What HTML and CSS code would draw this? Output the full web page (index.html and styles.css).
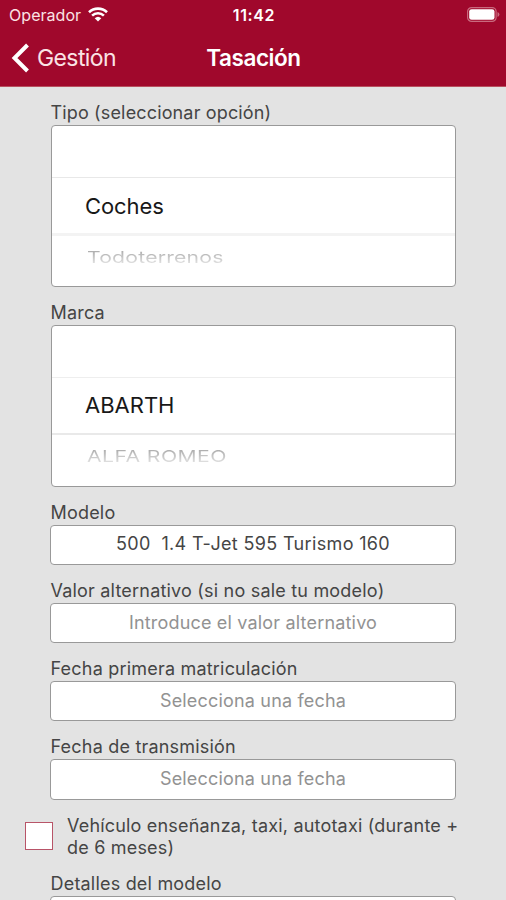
FILE: index.html
```html
<!DOCTYPE html>
<html lang="es">
<head>
<meta charset="utf-8">
<title>Tasación</title>
<link rel="stylesheet" href="styles.css">
</head>
<body>
<header class="header">
  <div class="status">
    <div class="carrier"><span class="t-carrier">Operador</span>
      <svg class="wifi" viewBox="0 0 20 15"><path d="M1 5.2a13 13 0 0 1 18 0M4.1 8.6a8.6 8.6 0 0 1 11.8 0" fill="none" stroke="#fff" stroke-width="2.6"/><path d="M10 14.600l-3.300-3.400a4.800 4.800 0 0 1 6.600 0z" fill="#fff"/></svg>
    </div>
    <span class="t-clock">11:42</span>
    <svg class="battery" viewBox="0 0 33 15"><rect x=".6" y=".6" width="28.500" height="13.800" rx="4" fill="none" stroke="#c96a7e" stroke-width="1.2"/><rect x="2.200" y="2.200" width="25.300" height="10.600" rx="2.400" fill="#fff"/><path d="M30.500 5v5q1.900-.8 1.900-2.500T30.500 5z" fill="#c96a7e"/></svg>
  </div>
  <nav class="nav">
    <a class="back"><svg class="chevron" viewBox="0 0 18 30"><path d="M16.500 2L3.500 15l13 13" fill="none" stroke="#fff" stroke-width="4"/></svg><span class="t-back">Gestión</span></a>
    <h1><span class="t-title">Tasación</span></h1>
  </nav>
</header>
<main class="form">
  <label><span class="t-tipo">Tipo (seleccionar opción)</span></label>
  <div class="picker"><div class="row"></div><div class="row sel"><span class="t-coches">Coches</span></div><div class="row next"><span class="t-todo">Todoterrenos</span></div></div>
  <label><span class="t-marca">Marca</span></label>
  <div class="picker last"><div class="row"></div><div class="row sel thin"><span class="t-abarth">ABARTH</span></div><div class="row next"><span class="t-alfa">ALFA ROMEO</span></div></div>
  <label><span class="t-modelo">Modelo</span></label>
  <div class="field filled"><span class="t-500">500&nbsp; 1.4 T-Jet 595 Turismo 160</span></div>
  <label><span class="t-valor">Valor alternativo (si no sale tu modelo)</span></label>
  <div class="field"><span class="t-intro">Introduce el valor alternativo</span></div>
  <label><span class="t-fecha1">Fecha primera matriculación</span></label>
  <div class="field"><span class="t-sel">Selecciona una fecha</span></div>
  <label><span class="t-fecha2">Fecha de transmisión</span></label>
  <div class="field"><span class="t-sel">Selecciona una fecha</span></div>
  <div class="check"><span class="box"></span><p><span class="t-veh">Vehículo enseñanza, taxi, autotaxi (durante +</span><br><span class="t-meses">de 6 meses)</span></p></div>
  <label><span class="t-det">Detalles del modelo</span></label>
  <div class="field cut"></div>
</main>
</body>
</html>
```
FILE: styles.css
```css
* { box-sizing: border-box; }
html { overflow: hidden; }
body { margin: 0; height: 900px; overflow: hidden; display: flex; flex-direction: column; background: #e3e3e3; color: #454545; font-family: Inter, "Liberation Sans", sans-serif; }
span { white-space: pre; }
.header { flex: none; height: 87px; background: #a0082c; color: #fff; border-bottom: 1px solid #b8505f; }
.status { height: 29px; display: grid; grid-template-columns: 1fr auto 1fr; align-items: center; padding: 0 6px 0 9px; font-size: 16px; }
.carrier { display: flex; align-items: center; gap: 7px; color: #fbe3e5; }
.t-carrier { letter-spacing: .05px; }
.wifi { width: 20px; height: 15px; }
.t-clock { font-weight: 600; letter-spacing: .6px; margin-left: -1px; }
.battery { width: 33px; height: 15px; justify-self: end; margin-top: -1px; }
.nav { height: 57px; display: grid; grid-template-columns: 1fr auto 1fr; align-items: center; padding: 0 11px; }
.back { display: flex; align-items: center; gap: 8px; font-size: 23px; color: #fbe3e5; }
.t-back { letter-spacing: -.6px; }
.chevron { width: 18px; height: 30px; }
h1 { margin: 0; font-size: 22.500px; font-weight: 600; letter-spacing: -.45px; padding-left: 1px; }
.form { flex: 1; min-height: 0; overflow: hidden; padding: 14px 50px 0; }
label { display: block; height: 24px; line-height: 24px; font-size: 18px; letter-spacing: .2px; padding-left: .5px; }
.picker { height: 162px; margin-bottom: 13.500px; margin-left: 1px; border: 1px solid #999; border-radius: 4px; background: #fff; overflow: hidden; }
.last { margin-bottom: 14.100px; }
.row { height: 51px; display: flex; align-items: center; padding-left: 33px; }
.sel { height: 59px; border: solid #e8e8e8; border-width: 1px 0 3px; border-bottom-color: #f3f3f3; color: #181818; font-size: 22px; letter-spacing: -.1px; }
.thin { border-width: 1px 0 2px; border-top-color: #eee; border-bottom-color: #e9e9e9; height: 58px; }
.t-abarth { letter-spacing: 0; }
.next { height: 42px; padding-left: 35px; font-size: 21.200px; }
.next span { transform: scaleY(.78); background: linear-gradient(#aaa 15%, #e2e2e2 85%); background-clip: text; color: transparent; }
.t-todo { letter-spacing: .2px; }
.t-alfa { letter-spacing: .42px; }
.field { height: 40px; margin-bottom: 14px; border: 1px solid #999; border-radius: 4px; background: #fff; color: #929292; display: flex; align-items: center; justify-content: center; font-size: 18px; line-height: 22px; padding-bottom: 1px; letter-spacing: .18px; }
.filled { color: #454545; }
.t-500 { letter-spacing: .34px; }
.check { display: flex; align-items: center; gap: 14px; margin: 0 -40px 14px -25px; height: 45px; }
.box { width: 28px; height: 28px; border: 1px solid #b85468; background: #fff; }
p { margin: 2px 0 0; font-size: 18px; line-height: 22px; letter-spacing: .19px; }
.t-tipo { letter-spacing: .15px; }
.field:not(.cut) { height: 40.500px; margin-bottom: 13.700px; }
.cut { margin-bottom: 0; }
```
